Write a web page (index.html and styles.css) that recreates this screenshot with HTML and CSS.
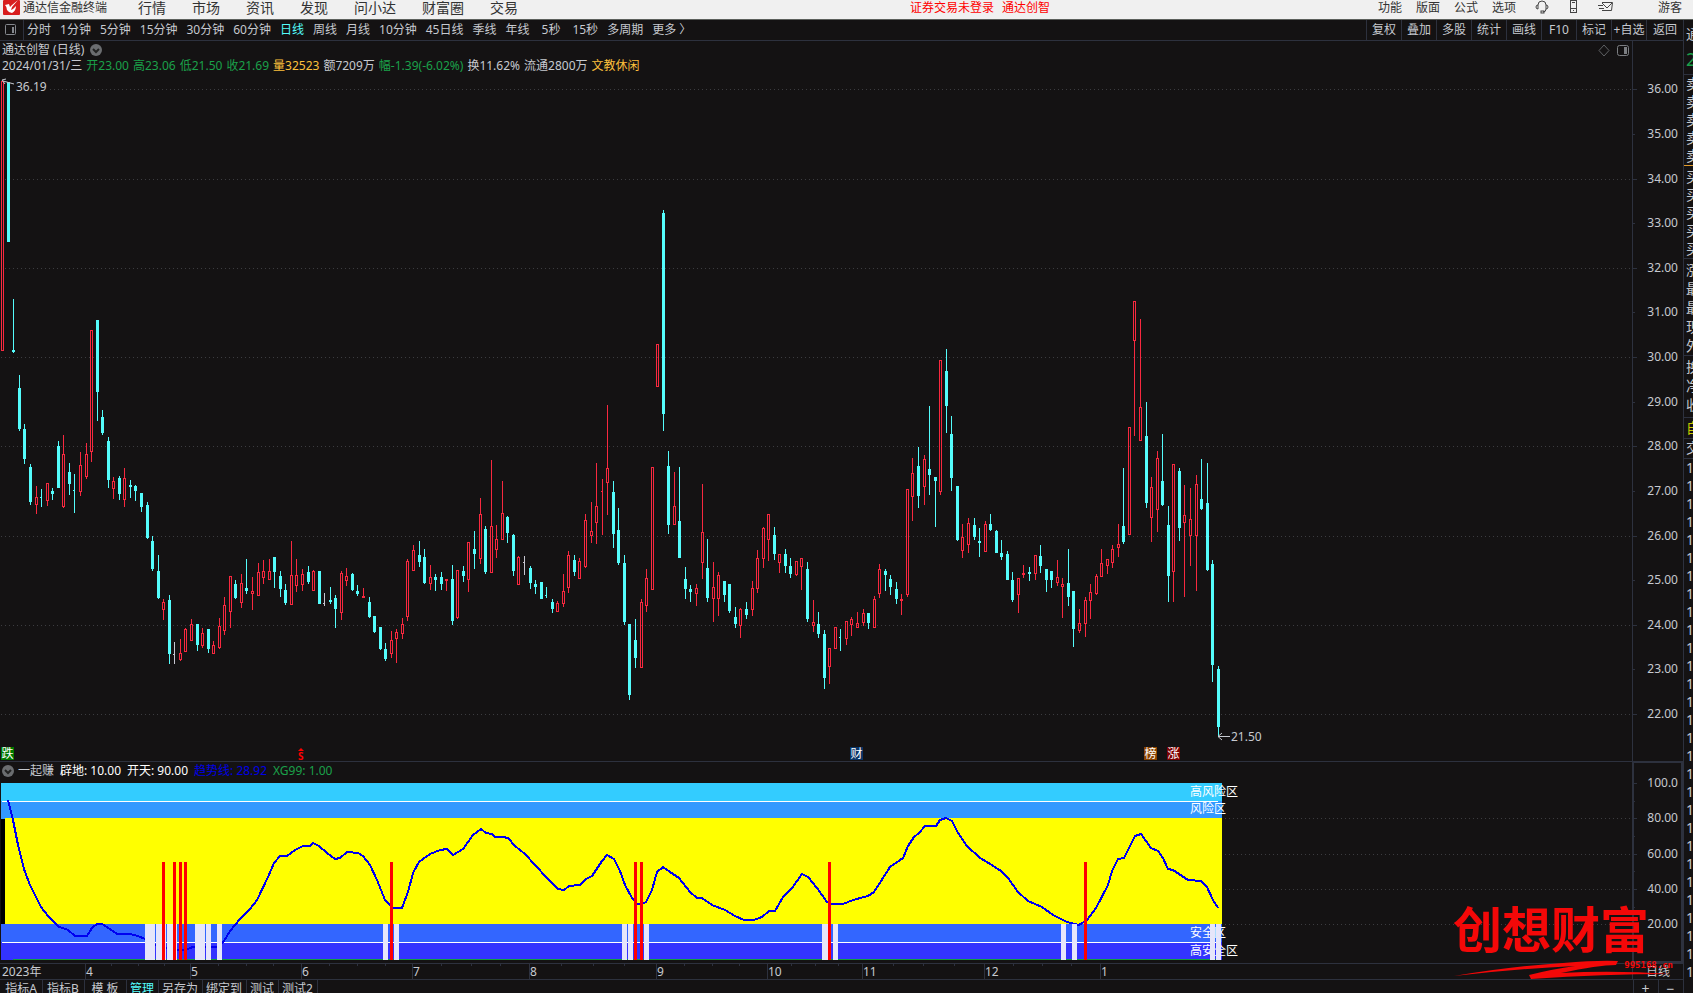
FILE: index.html
```
<!DOCTYPE html>
<html lang="zh-CN">

<head>
  <meta charset="UTF-8">
  <meta name="viewport" content="width=device-width, initial-scale=1.0">
  <title>通达信金融终端</title>
  <link rel="stylesheet" href="styles.css">
</head>

<body>
  <header class="topbar">
    <svg class="logo" width="17" height="15" viewBox="0 0 17 15">
      <rect width="17" height="15" rx="1" fill="#d81e1e" />
      <path d="M15 0 L9 5 L7 7 L6 4 L2 5 Q4 7 4 10 Q6 13 9 13 Q13 11 13 6 L10 9 L8 10 L9 7 Z" fill="#fff" />
    </svg>
    <span class="app-name">通达信金融终端</span>
    <nav class="menu">
      <a href="#">行情</a>
      <a href="#">市场</a>
      <a href="#">资讯</a>
      <a href="#">发现</a>
      <a href="#">问小达</a>
      <a href="#">财富圈</a>
      <a href="#">交易</a>
    </nav>
    <div class="status">
      <span>证券交易未登录</span>
      <span>通达创智</span>
    </div>
    <div class="options">
      <a href="#">功能</a>
      <a href="#">版面</a>
      <a href="#">公式</a>
      <a href="#">选项</a>
    </div>
    <div class="top-icons">
      <svg width="14" height="14" viewBox="0 0 14 14">
        <path d="M3 9 Q1 9 1 7 Q1 5 3 5 Q3 1 7 1 Q11 1 11 5 Q13 5 13 7 Q13 9 11 9 M3 5 V9 M11 5 V9 Q11 12 8 12" />
        <rect x="6" y="11" width="3" height="2" />
      </svg>
      <svg width="9" height="14" viewBox="0 0 9 14">
        <rect x="1.500" y="0.500" width="6" height="12" />
        <path d="M1 8.500 H8 M4 10.500 H5 M3 2.500 H6" />
      </svg>
      <svg width="16" height="14" viewBox="0 0 16 14">
        <path d="M4 2.500 H14.500 L13.500 10.500 H4 M4 3 L9 8 L14 3 M0 5.500 H5 M1 8.500 H6" />
      </svg>
    </div>
    <a class="user" href="#">游客</a>
  </header>

  <div class="app">
    <main class="main">
      <div class="toolbar">
        <button class="panel-toggle" aria-label="侧栏">
          <svg width="13" height="12" viewBox="0 0 13 12">
            <rect x="1.500" y="0.500" width="10" height="10" rx="1" fill="none" stroke="#85888e" />
            <rect x="8" y="3" width="2" height="6" fill="#85888e" />
          </svg>
        </button>
        <div class="periods">
          <button>分时</button>
          <button>1分钟</button>
          <button>5分钟</button>
          <button>15分钟</button>
          <button>30分钟</button>
          <button>60分钟</button>
          <button class="active">日线</button>
          <button>周线</button>
          <button>月线</button>
          <button>10分钟</button>
          <button>45日线</button>
          <button>季线</button>
          <button>年线</button>
          <button class="sec">5秒</button>
          <button class="sec">15秒</button>
          <button>多周期</button>
          <button>更多 〉</button>
        </div>
        <div class="tools">
          <button>复权</button>
          <button>叠加</button>
          <button>多股</button>
          <button>统计</button>
          <button>画线</button>
          <button>F10</button>
          <button>标记</button>
          <button>+自选</button>
          <button>返回</button>
        </div>
      </div>

      <section class="panel">
        <div class="plot">
          <div class="title-row">
            <span>通达创智 (日线)</span>
            <svg width="12" height="12" viewBox="0 0 12 12">
              <circle cx="6" cy="6" r="6" fill="#6b6d70" />
              <path d="M3 5 L6 8 L9 5" fill="none" stroke="#222" stroke-width="2" />
            </svg>
            <svg class="window-icons" width="32" height="13" viewBox="0 0 32 13">
              <path d="M6 1 L11 6.500 L6 12 L1 6.500 Z" fill="none" stroke="#5f6164" />
              <rect x="19.500" y="1.500" width="11" height="10" rx="2" fill="none" stroke="#7c7e82" />
              <rect x="26" y="3" width="3" height="7" fill="#7c7e82" />
            </svg>
          </div>
          <div class="info-row">
            <span>2024/01/31/三</span>
            <span class="green">开23.00</span>
            <span class="green">高23.06</span>
            <span class="green">低21.50</span>
            <span class="green">收21.69</span>
            <span class="gold">量32523</span>
            <span>额7209万</span>
            <span class="green">幅-1.39(-6.02%)</span>
            <span>换11.62%</span>
            <span>流通2800万</span>
            <span class="gold">文教休闲</span>
          </div>
          <svg class="price-chart" id="priceChart"></svg>
        </div>
        <svg class="price-axis" id="priceAxis"></svg>
      </section>

      <section class="panel sub">
        <div class="plot">
          <div class="indicator-row">
            <svg width="12" height="12" viewBox="0 0 12 12">
              <circle cx="6" cy="6" r="6" fill="#6b6d70" />
              <path d="M3 5 L6 8 L9 5" fill="none" stroke="#222" stroke-width="2" />
            </svg>
            <span class="name">一起赚</span>
            <span class="white">辟地: 10.00</span>
            <span class="white">开天: 90.00</span>
            <span class="blue">趋势线: 28.92</span>
            <span class="green">XG99: 1.00</span>
          </div>
          <svg class="trend-chart" id="trendChart"></svg>
        </div>
        <svg class="trend-axis" id="trendAxis"></svg>
      </section>

      <div class="time-row">
        <svg class="time-axis" id="timeAxis"></svg>
        <span class="period-name">日线</span>
      </div>

      <footer class="tabs">
        <button class="wide">指标A</button>
        <button class="wide">指标B</button>
        <button class="wide">模 板</button>
        <button class="active">管理</button>
        <button>另存为</button>
        <button>绑定到</button>
        <button>测试</button>
        <button>测试2</button>
        <div class="zoom">
          <button>+</button>
          <button>−</button>
        </div>
      </footer>

      <div class="watermark">
        <span class="brand">创想财富</span>
        <svg width="220" height="20" viewBox="0 0 220 20">
          <path d="M1 16 Q60 6 110 3 Q145 0 165 1 L163 5 Q145 5 108 13 Q160 10 218 14 Q150 14 78 19 L76 15 Q100 9 122 6 Q60 9 1 16 Z" fill="#f40808" />
        </svg>
        <span class="site">995168.cn</span>
      </div>
    </main>

    <aside class="quote">
      <div class="code">通</div>
      <div class="last">2</div>
      <div class="group asks"><p>卖</p><p>卖</p><p>卖</p><p>卖</p><p>卖</p></div>
      <div class="group bids"><p>买</p><p>买</p><p>买</p><p>买</p><p>买</p></div>
      <div class="group stats"><p>涨</p><p>最</p><p>最</p><p>现</p><p>外</p></div>
      <div class="group stats"><p>换</p><p>净</p><p>收</p></div>
      <div class="self">自</div>
      <div class="deal">交</div>
      <div class="ticks" id="ticks"></div>
    </aside>
  </div>

  <script src="chart.js"></script>
</body>

</html>
```
FILE: styles.css
```
body {
  margin: 0;
  height: 100vh;
  overflow: hidden;
  background-color: #141213;
  color: #c6c9cf;
  font-family: "Noto Sans", "Noto Sans CJK SC", sans-serif;
  font-size: 12px;
  line-height: 16px;
}

button {
  margin: 0;
  padding: 0;
  border: none;
  background: none;
  color: inherit;
  font: inherit;
  white-space: nowrap;
  cursor: pointer;
}

a {
  color: inherit;
  text-decoration: none;
}

svg {
  display: block;
  flex: none;
}

/* top menu */
.topbar {
  display: flex;
  align-items: flex-start;
  box-sizing: border-box;
  height: 20px;
  padding: 0 11px 0 3px;
  border-bottom: 1px solid #5c605c;
  background-color: #f0f0f0;
  color: #333;
  line-height: 15px;
  white-space: nowrap;
}

.app-name {
  margin-left: 3px;
}

.menu {
  display: flex;
  gap: 26px;
  margin-left: 31px;
  font-size: 14px;
}

.status {
  display: flex;
  gap: 8px;
  margin-left: auto;
  color: #f00;
}

.options {
  display: flex;
  gap: 14px;
  margin-left: 328px;
}

.top-icons {
  display: flex;
  gap: 20px;
  margin-left: 19px;
}

.top-icons svg {
  fill: none;
  stroke: #444;
}

.user {
  margin-left: 44px;
}

.app {
  display: grid;
  grid-template-columns: minmax(0, 1fr) 10px;
}

.main {
  position: relative;
}

/* period toolbar */
.toolbar {
  display: flex;
  height: 20px;
  border-bottom: 1px solid #2d313e;
  line-height: 20px;
}

.panel-toggle {
  width: 24px;
  padding: 4px;
  border-right: 1px solid #2d313e;
}

.periods {
  display: flex;
  gap: 9px;
  margin-left: 3px;
}

.periods .sec {
  margin-left: 3px;
}

.active {
  color: #54fcfc;
}

.tools {
  display: flex;
  margin-left: auto;
}

.tools button {
  box-sizing: border-box;
  width: 35px;
  border-left: 1px solid #2d313e;
}

.tools button:last-child {
  width: 37px;
}

/* chart panels */
.panel {
  display: flex;
}

.plot {
  flex: 1;
  min-width: 0;
}

.title-row {
  display: flex;
  align-items: center;
  gap: 6px;
  height: 18px;
  padding: 0 2px;
}

.window-icons {
  margin-left: auto;
}

.info-row {
  display: flex;
  gap: 4px;
  height: 15px;
  padding-left: 2px;
  line-height: 14px;
  white-space: nowrap;
}

.green {
  color: #1ba04a;
}

.gold {
  color: #fdc03c;
}

.white {
  color: #fff;
}

.blue {
  color: #0000e6;
}

.price-chart {
  width: 100%;
  height: 687px;
}

.price-axis {
  width: 51px;
  height: 720px;
}

.sub {
  border-top: 1px solid #2d313e;
}

.indicator-row {
  display: flex;
  align-items: center;
  gap: 6px;
  height: 18px;
  padding-left: 2px;
  line-height: 18px;
}

.indicator-row .name {
  margin-left: -2px;
}

.trend-chart {
  width: 100%;
  height: 183px;
}

.trend-axis {
  width: 51px;
  height: 201px;
}

svg text {
  fill: #c6c9cf;
}

.grid {
  stroke: #3c3c40;
  stroke-dasharray: 1 3;
}

.axis-line {
  stroke: #2d313e;
}

.axis-box {
  fill: none;
  stroke: #2d313e;
  stroke-width: 2;
}

.down {
  fill: #54fcfc;
}

.up {
  fill: #f8283f;
}

.up-body {
  fill: none;
  stroke: #f8283f;
}

.flat {
  fill: #c6c6d0;
}

.arrow {
  fill: none;
  stroke: #c6c9cf;
}

.trend {
  fill: none;
  stroke: #0000f0;
  stroke-width: 2;
  shape-rendering: crispEdges;
}

svg .zone {
  fill: #fff;
}

svg .badge {
  fill: #fff;
  font-size: 12px;
}

svg .signal {
  fill: #f00;
  font-size: 10px;
  font-weight: bold;
}

/* time axis and bottom tabs */
.time-row {
  display: flex;
  height: 15px;
  border-top: 1px solid #2d313e;
}

.time-axis {
  flex: 1;
  min-width: 0;
  height: 15px;
}

.period-name {
  box-sizing: border-box;
  width: 51px;
  padding-left: 13px;
  border-left: 1px solid #2d313e;
  line-height: 15px;
}

.tabs {
  display: flex;
  height: 20px;
  padding-left: 1px;
  border-top: 1px solid #2d313e;
  line-height: 17px;
}

.tabs button {
  height: 17px;
  padding: 0 4px 0 3px;
  border-right: 1px solid #2d313e;
}

.tabs .wide {
  width: 42px;
}

.zoom {
  display: flex;
  margin-left: auto;
}

.tabs .zoom button {
  box-sizing: border-box;
  width: 25px;
  border-right: none;
  border-left: 1px solid #2d313e;
  font-size: 14px;
}

/* brand mark over the lower right corner */
.watermark {
  position: absolute;
  right: 10px;
  bottom: 20px;
  width: 220px;
  height: 82px;
  color: #f40808;
}

.watermark svg {
  margin-top: 2px;
}

.brand {
  display: block;
  height: 60px;
  font-family: "Noto Sans CJK SC", sans-serif;
  font-size: 49px;
  font-weight: bold;
  line-height: 58px;
}

.site {
  position: absolute;
  right: 0;
  bottom: 9px;
  font-family: "DejaVu Sans Mono", monospace;
  font-size: 9px;
  font-weight: bold;
  line-height: 12px;
}

/* quote panel */
.quote {
  height: 973px;
  padding-left: 2px;
  border-left: 1px solid #2d313e;
  overflow: hidden;
  font-size: 14px;
  line-height: 18px;
}

.quote p {
  margin: 0;
}

.code {
  padding-top: 5px;
}

.last {
  height: 31px;
  color: #1ba04a;
  font-size: 18px;
  line-height: 32px;
}

.group,
.self,
.deal,
.ticks {
  margin-left: -2px;
  padding-left: 2px;
  border-top: 1px solid #2d313e;
}

.asks {
  height: 90px;
}

.bids {
  height: 90px;
  padding-top: 2px;
  border-top-color: #e09a2c;
}

.stats {
  padding: 1px 0 0 2px;
  line-height: 19px;
}

.stats + .stats {
  padding-bottom: 3px;
}

.self {
  height: 20px;
  color: #c8c800;
  line-height: 20px;
}

.deal {
  height: 19px;
}
```
FILE: chart.js
```
// one entry per day: kind (u/d/f), high, body top, body bottom, low
const candles = `
u81,81,351,351 d82,82,242,242 d299,350,352,353 d375,388,429,431 d424,429,459,464 d464,467,502,505
u486,497,505,514 d489,497,498,507 u483,483,501,506 d488,491,494,500 d441,446,488,488 u435,454,507,508
d463,472,484,495 d474,490,491,513 u452,465,492,496 u443,454,477,479 u330,330,452,462 d320,320,392,421
d410,417,433,435 d437,441,480,488 u477,481,489,499 d476,478,494,500 u468,478,500,507 d480,485,487,498
d485,486,491,501 d493,493,507,512 d502,505,538,539 d536,541,569,571 d555,571,598,599 u599,602,610,620
d595,600,654,664 f642,654,655,664 u639,653,660,661 u628,629,652,652 u619,624,641,641 d624,624,645,651
u628,633,646,648 d629,629,649,653 u641,645,654,654 u618,626,648,649 u597,605,631,635 u576,576,612,628
d580,584,598,599 u574,583,603,608 d559,588,591,594 u577,591,594,610 u563,572,596,596 u560,571,578,584
u559,571,580,580 d557,557,572,588 d571,576,589,597 d584,590,603,605 u541,575,605,605 u559,575,586,592
u569,574,585,591 d566,572,582,584 u570,571,591,591 d571,571,604,604 f593,603,604,606 d587,600,602,604
d595,598,609,628 u571,573,613,620 u568,576,581,586 d573,574,590,591 d585,591,594,596 u588,596,598,598
d597,602,617,618 d616,616,632,633 d627,627,649,650 d643,649,659,661 u631,640,654,658 u629,632,639,663
u618,624,634,639 u559,561,617,621 u545,550,571,571 d541,555,562,567 d549,557,583,584 u565,577,584,590
d574,577,580,591 d572,577,584,590 u579,579,581,591 d565,579,621,625 u570,570,618,619 d566,571,576,582
u542,542,580,592 d531,549,554,569 u498,514,559,564 d526,529,572,574 u460,526,573,573 u525,539,550,558
u481,513,540,540 d516,517,533,543 d534,535,571,576 u556,557,585,585 f556,562,563,575 d566,568,583,589
d580,584,587,594 d582,582,599,599 d587,595,596,598 d599,602,609,613 u601,603,612,612 u574,591,604,607
u551,555,588,593 d555,560,572,576 u558,561,579,579 u514,520,567,568 u502,531,536,543 u463,506,523,544
u479,491,492,535 u405,468,483,515 d481,492,534,548 d508,530,563,565 d555,563,622,625 d624,624,695,700
d619,640,658,668 u599,602,668,668 u569,578,606,612 u467,467,590,590 u344,344,387,387 d210,213,414,431
d451,466,525,534 u472,506,525,525 d467,521,558,558 d567,579,589,599 d585,589,592,602 u584,588,594,606
u484,532,563,579 d539,568,598,602 u562,587,599,622 u572,575,599,616 d581,581,595,602 d584,584,611,613
d607,617,624,628 u608,609,626,638 d602,609,615,619 u581,588,610,616 u550,558,589,593 u527,528,559,568
u514,514,540,561 d527,535,554,560 u554,554,563,573 d549,554,566,573 d558,566,574,578 u561,561,575,576
u558,558,567,590 d562,569,619,622 u600,622,626,632 d612,624,634,638 d630,634,678,689 u648,648,667,684
u627,627,649,649 d629,637,638,651 u621,621,639,645 u617,619,625,636 u612,623,628,628 u609,613,623,626
d613,613,623,629 u596,599,628,628 u564,569,594,598 d569,571,575,591 d575,579,587,595 d582,589,599,604
u594,599,601,615 u489,489,595,597 u458,473,497,521 d447,466,496,508 u455,459,487,505 d406,469,475,495
d477,477,481,527 u360,360,492,495 d349,371,406,433 d416,434,478,491 d486,486,540,541 u524,537,551,558
u518,523,545,553 d518,525,537,540 d528,541,543,557 u521,524,552,552 d514,524,530,531 d530,531,553,553
d540,553,557,560 d551,554,580,580 d572,580,600,602 u578,578,595,613 u565,573,575,578 d567,572,574,581
u555,555,574,580 d545,556,566,573 d569,569,580,592 d571,571,580,588 u560,577,583,586 u578,584,587,618
d549,583,597,606 d591,591,629,647 u609,623,631,633 u597,600,624,637 u584,592,601,619 u574,576,594,595
u549,563,577,577 u559,559,566,574 u545,549,563,568 u524,544,548,557 d468,526,542,544 u427,427,535,535
u301,301,341,436 u319,407,441,441 d402,436,503,508 u477,487,518,542 u451,458,510,532 d434,481,505,506
d506,525,576,602 u464,464,572,602 d468,471,528,541 u485,515,523,597 u488,519,536,566 u475,484,536,591
d459,499,509,510 d463,503,570,571 d560,564,665,682 d666,669,727,736`.trim().split(/\s+/);

const trend = `8,800 13,820 18,845 24,869 30,885 41,907 48,916 55,923 59,927 63,928 68,930 75,936 87,936 92,928
97,924 102,924 107,927 117,934 130,934 138,936 145,939 157,946 167,948 178,950 185,950 193,947 217,947 224,941
230,931 240,919 250,909 257,900 268,877 274,863 280,856 287,856 295,850 303,846 310,846 313,843 319,846 327,853
335,859 340,858 347,852 358,853 363,856 370,865 377,880 385,900 393,908 402,908 408,892 413,873 419,862 430,854
440,850 447,849 453,855 463,849 473,835 481,829 486,833 492,834 495,837 503,837 508,838 515,846 525,854 535,865
547,878 558,889 564,890 569,886 580,885 586,879 592,876 602,861 607,855 614,859 620,871 625,885 632,898 637,904
642,904 646,902 652,890 657,872 663,867 670,872 679,878 690,892 697,898 702,898 712,905 725,910 735,916 744,920
754,920 762,917 769,911 775,911 783,897 792,888 802,874 808,877 817,888 827,902 831,904 843,904 853,900 868,896
874,892 890,867 903,858 908,846 914,837 919,833 925,826 936,826 940,820 946,818 952,821 958,833 967,846 980,858
987,862 1001,871 1008,878 1018,892 1028,901 1042,907 1053,915 1067,922 1079,925 1087,920 1096,908 1108,885
1112,871 1118,859 1124,858 1135,836 1141,834 1151,848 1158,851 1163,858 1168,869 1173,870 1188,880 1201,881
1207,887 1213,900 1218,908`;

// x and width of the pale bars, x of the red signal bars
const paleBars = [[145, 10], [156, 10], [167, 10], [195, 10], [206, 5], [217, 5], [383, 5], [394, 5], [622, 5],
  [628, 5], [644, 5], [822, 6], [833, 5], [1061, 5], [1072, 5], [1210, 5], [1216, 5]];
const signalBars = [162, 173, 179, 184, 390, 634, 640, 828, 1084];

const badges = [[1, '跌', '#007800'], [850, '财', '#0a3466'], [1144, '榜', '#8a4200'], [1167, '涨', '#7c0000']];

const months = [[85, '4'], [190, '5'], [301, '6'], [412, '7'], [529, '8'], [656, '9'], [767, '10'], [862, '11'],
  [984, '12'], [1100, '1']];
const weeks = [111, 138, 164, 218, 246, 273, 329, 357, 385, 441, 471, 500, 561, 593, 624, 684, 712, 739, 791, 815,
  838, 893, 923, 954, 1013, 1042, 1071];

function rect(x, y, w, h, attrs) {
  return `<rect x="${x}" y="${y}" width="${w}" height="${h}" ${attrs} />`;
}

function hline(y, x1, x2, cls) {
  return `<line x1="${x1}" x2="${x2}" y1="${y + 0.5}" y2="${y + 0.5}" class="${cls}" />`;
}

function text(x, y, str, attrs = '') {
  return `<text x="${x}" y="${y}" ${attrs}>${str}</text>`;
}

// shifts the drawing so that window rows can be used as y values
function draw(id, top, content) {
  document.getElementById(id).innerHTML = `<g transform="translate(0 ${-top})" >${content}</g>`;
}

function priceY(price) {
  return Math.round(89.3 + (36 - price) * 44.62);
}

function trendY(value) {
  return Math.round(783 + (100 - value) * 1.765);
}

function drawCandle(item, i) {
  const kind = item[0];
  const [high, top, bottom, low] = item.slice(1).split(',').map(Number);
  const x = Math.round(2.25 + i * 5.55);
  if (kind === 'f' || bottom - top < 2) {
    const cls = { u: 'up', d: 'down', f: 'flat' }[kind];
    return rect(x, high, 1, low - high, `class="${cls}"`) + rect(x - 1, top, 2, 1, `class="${cls}"`);
  }
  if (kind === 'd') {
    return rect(x, high, 1, low - high, 'class="down"') + rect(x - 1, top, 3, bottom - top, 'class="down"');
  }
  return rect(x, high, 1, top - high, 'class="up"') + rect(x, bottom, 1, low - bottom, 'class="up"') +
    rect(x - 0.5, top + 0.5, 2, bottom - top - 1, 'class="up-body"');
}

function drawPrice() {
  let out = '';
  for (let p = 36; p >= 22; p -= 2) {
    out += hline(priceY(p), p === 36 ? 50 : 1, '100%', 'grid');
  }
  out += '<g shape-rendering="crispEdges">' + candles.map(drawCandle).join('') + '</g>';
  out += '<path class="arrow" d="M3 81 L14 84 M6 79 L2 80 L5 84" />' + text(16, 91, '36.19');
  out += '<path class="arrow" d="M1218 736.500 H1230 M1222 733 L1218 736.500 L1222 740" />' + text(1231, 741, '21.50');
  badges.forEach(([x, label, color]) => {
    out += rect(x, 747, 13, 13, `fill="${color}"`) + text(x + 0.5, 758, label, 'class="badge"');
  });
  out += '<path d="M298 751 L301 748 L304 751 Z" fill="#f00" />' + text(298, 760, 'S', 'class="signal"');
  draw('priceChart', 74, out);

  let axis = '<line x1="0.500" x2="0.500" y1="41" y2="761" class="axis-line" />';
  for (let p = 36; p >= 22; p--) {
    const y = priceY(p);
    axis += hline(y, 1, p % 2 ? 3 : 5, 'axis-line') + text(46, y + 4, p + '.00', 'text-anchor="end"');
  }
  draw('priceAxis', 41, axis);
}

function drawTrend() {
  let out = '';
  [80, 60, 40, 20].forEach(v => {
    out += hline(trendY(v), 1, '100%', 'grid');
  });
  out += rect(1, 783, 1221, 18, 'fill="#33ccff"') + rect(1, 801, 1221, 18, 'fill="#3399ff"');
  out += rect(1, 819, 4, 105, 'fill="#000"') + rect(5, 818, 1217, 106, 'fill="#ffff00"');
  out += rect(1, 924, 1221, 18, 'fill="#3366ff"') + rect(1, 942, 1221, 18, 'fill="#3333ff"');
  out += rect(2, 801, 1216, 1, 'fill="#fff"') + rect(2, 942, 1216, 1, 'fill="#fff"');
  out += rect(13, 959, 1205, 1, 'fill="#12a040"');
  out += `<polyline class="trend" points="${trend}" />`;
  out += text(1190, 796, '高风险区', 'class="zone"') + text(1190, 813, '风险区', 'class="zone"');
  out += text(1190, 937, '安全区', 'class="zone"') + text(1190, 955, '高安全区', 'class="zone"');
  paleBars.forEach(([x, w]) => {
    out += rect(x, 924, w, 36, 'fill="#e6e6fa"');
  });
  signalBars.forEach(x => {
    out += rect(x, 862, 3, 98, 'fill="#f00"');
  });
  draw('trendChart', 780, out);

  let axis = '<rect x="1" y="762" width="49" height="200" class="axis-box" />';
  for (let v = 100; v > 0; v -= 10) {
    const y = trendY(v);
    axis += hline(y, 1, v % 20 ? 3 : 5, 'axis-line');
    if (v % 20 === 0) {
      axis += text(46, y + 4, v === 100 ? '100.0' : v + '.00', 'text-anchor="end"');
    }
  }
  draw('trendAxis', 762, axis);
}

function drawTime() {
  let out = text(2, 12, '2023年');
  months.forEach(([x, label]) => {
    out += rect(x, 0, 1, 15, 'fill="#2d313e"') + text(x + 1, 12, label);
  });
  weeks.forEach(x => {
    out += rect(x, 0, 1, 2, 'fill="#2d313e"');
  });
  draw('timeAxis', 0, out);
}

drawPrice();
drawTrend();
drawTime();
document.getElementById('ticks').innerHTML = '<p>1</p>'.repeat(29);
```
